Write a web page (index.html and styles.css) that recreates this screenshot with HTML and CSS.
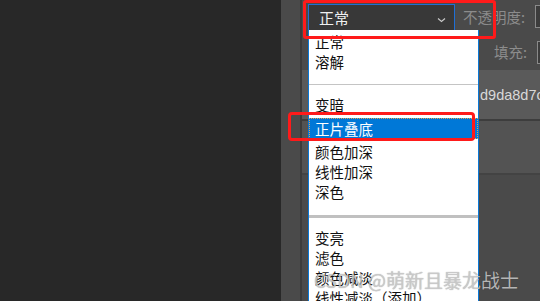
FILE: index.html
```html
<!DOCTYPE html>
<html lang="zh">
<head>
<meta charset="utf-8">
<link rel="stylesheet" href="styles.css">
</head>
<body>
<div class="left"></div>
<div class="panel">
  <div class="gutter"></div>
  <div class="divider"></div>
  <div class="main">
    <div class="row-opts">
      <div class="select"><span>正常</span>
        <svg class="chev" width="9" height="6" viewBox="0 0 9 6"><path d="M1 1.5 L4.5 4.5 L8 1.5" fill="none" stroke="#c8c8c8" stroke-width="1.2"/></svg>
      </div>
      <span class="label lbl-opacity">不透明度:</span>
      <div class="field"></div>
    </div>
    <div class="row-fill">
      <span class="label lbl-fill">填充:</span>
      <div class="field"></div>
    </div>
    <div class="layer-row"><span class="layer-name">d9da8d7c</span></div>
    <div class="layer-row2"></div>
    <div class="rest"></div>

    <ul class="list">
      <li class="item first">正常</li>
      <li class="item">溶解</li>
      <li class="sep"></li>
      <li class="item">变暗</li>
      <li class="item active">正片叠底</li>
      <li class="item">颜色加深</li>
      <li class="item">线性加深</li>
      <li class="item">深色</li>
      <li class="sep thick"></li>
      <li class="item">变亮</li>
      <li class="item">滤色</li>
      <li class="item">颜色减淡</li>
      <li class="item">线性减淡（添加）</li>
    </ul>
  </div>
</div>
<div class="mark mark-top"></div>
<div class="mark mark-item"></div>
<div class="watermark">CSDN @萌新且暴龙战士</div>
</body>
</html>
```
FILE: styles.css
```css
* { box-sizing: border-box; }
html, body { margin: 0; padding: 0; }
body {
  width: 540px;
  height: 301px;
  overflow: hidden;
  display: flex;
  position: relative;
  font-family: "Noto Sans CJK SC", "Microsoft YaHei", sans-serif;
  background: #282828;
}
.left { width: 281px; flex-shrink: 0; background: #282828; }
.panel { flex: 1; min-width: 0; display: flex; background: #4a4a4a; }
.gutter { width: 19px; flex-shrink: 0; background: #4a4a4a; }
.divider { width: 2px; flex-shrink: 0; background: #3b3b3b; }
.main {
  flex: 1;
  min-width: 0;
  position: relative;
  display: flex;
  flex-direction: column;
  background: #4a4a4a;
  overflow: hidden;
}
.row-opts {
  height: 34px;
  flex-shrink: 0;
  display: flex;
  align-items: flex-start;
  padding-top: 4px;
  padding-left: 6px;
}
.select {
  width: 147px;
  flex-shrink: 0;
  height: 27px;
  background: #383838;
  border: 1px solid #1f6fd6;
  display: flex;
  align-items: center;
  justify-content: space-between;
  padding: 0 8px 0 10px;
  color: #f0f0f0;
  font-size: 15px;
}
.select span { line-height: 1; }
.chev { margin-top: 4px; }
.label {
  color: #8c8c8c;
  font-size: 14.5px;
  line-height: 26px;
  white-space: nowrap;
  flex-shrink: 0;
}
.lbl-opacity { margin-left: 8px; }
.field {
  margin-left: 10px;
  width: 20px;
  flex-shrink: 0;
  height: 23px;
  margin-top: 1px;
  border: 1px solid #8a8a8a;
  background: #3c3c3c;
}
.row-fill {
  height: 36px;
  flex-shrink: 0;
  display: flex;
  align-items: center;
  padding-left: 192px;
}
.row-fill .field { margin-left: 10px; width: 20px; }
.layer-row {
  height: 51px;
  flex-shrink: 0;
  background: #5a5a5a;
  border-bottom: 2px solid #3d3d3d;
  display: flex;
  align-items: center;
  padding-left: 178px;
}
.layer-name { color: #d8d8d8; font-size: 14.5px; font-family: "Liberation Sans", sans-serif; white-space: nowrap; }
.layer-row2 {
  height: 54px;
  flex-shrink: 0;
  background: #535353;
  border-bottom: 2px solid #434343;
}
.rest { flex: 1; background: #4a4a4a; }

.list {
  position: absolute;
  left: 6px;
  top: 30px;
  width: 171px;
  height: 290px;
  margin: 0;
  padding: 2px 0 0 0;
  list-style: none;
  background: #ffffff;
  border-left: 1px solid #0a78d7;
  border-right: 1px solid #0a78d7;
}
.item {
  height: 20px;
  line-height: 20px;
  padding-left: 6px;
  font-size: 14.5px;
  color: #111;
  white-space: nowrap;
}
.item.active {
  height: 21px;
  line-height: 19px;
  margin: 3px 0 3px;
  background: #0078d7;
  color: #ffffff;
  border: 1px dotted #e8a050;
  padding-left: 5px;
}
.sep {
  height: 1px;
  background: #c4c4c4;
  margin: 12px 0 10px;
}
.sep.thick {
  height: 3px;
  background: #c0c0c0;
  margin: 13px 0 10px;
}
.mark {
  position: absolute;
  border: 3px solid #ff1a1a;
  border-radius: 3px;
}
.mark-top { left: 303px; top: 0px; width: 193px; height: 39px; }
.mark-item { left: 288px; top: 112px; width: 187px; height: 29px; border-radius: 4px; }
.watermark {
  position: absolute;
  left: 314px;
  top: 266px;
  font-size: 19px;
  color: rgba(205, 205, 205, 0.85);
  text-shadow: 0 0 1px rgba(0, 0, 0, 0.35);
  white-space: nowrap;
  font-family: "Noto Sans CJK SC", sans-serif;
}
```
